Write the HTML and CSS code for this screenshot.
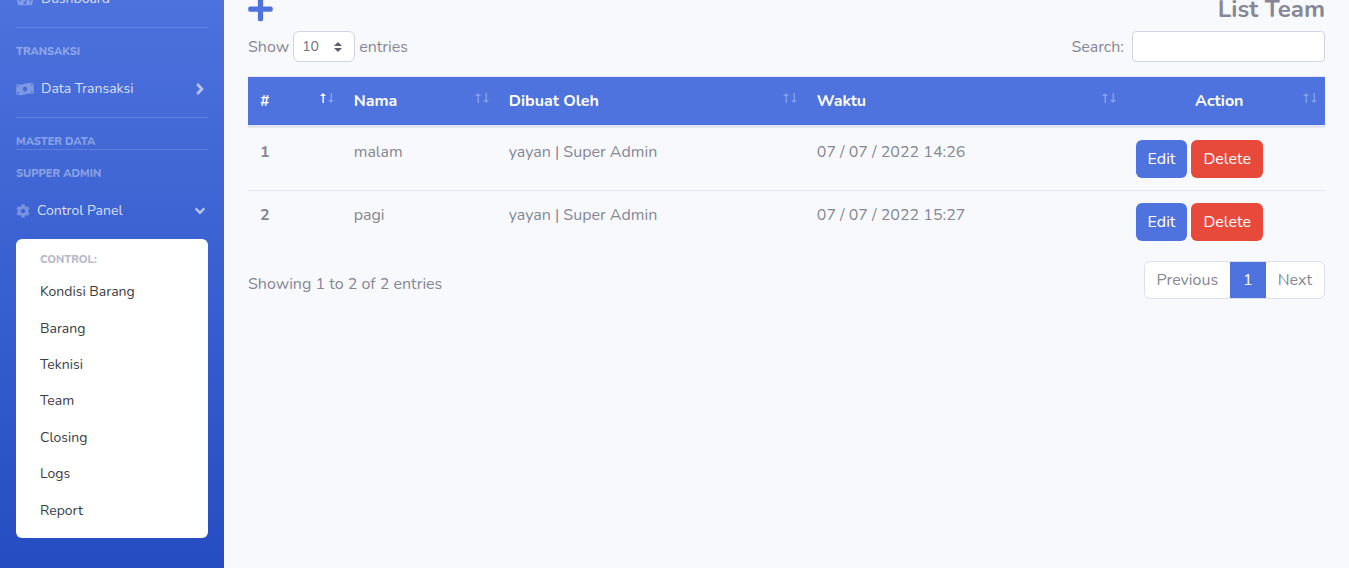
FILE: index.html
```
<!DOCTYPE html>
<html lang="id">
<head>
<meta charset="utf-8">
<meta name="viewport" content="width=device-width, initial-scale=1">
<title>List Team</title>
<link rel="stylesheet" href="styles.css">
</head>
<body>
<svg class="sprite" aria-hidden="true">
  <symbol id="angle-right" viewBox="0 0 256 512"><path d="M224.3 273l-136 136c-9.4 9.4-24.6 9.4-33.9 0l-22.6-22.6c-9.4-9.4-9.4-24.6 0-33.9l96.4-96.4-96.4-96.4c-9.4-9.4-9.4-24.6 0-33.9L54.3 103c9.4-9.4 24.6-9.4 33.9 0l136 136c9.5 9.4 9.5 24.6.1 34z"/></symbol>
  <symbol id="angle-down" viewBox="0 0 320 512"><path d="M143 352.3L7 216.3c-9.4-9.4-9.4-24.6 0-33.9l22.6-22.6c9.4-9.4 24.6-9.4 33.9 0l96.4 96.4 96.4-96.4c9.4-9.4 24.6-9.4 33.9 0l22.6 22.6c9.4 9.4 9.4 24.6 0 33.9l-136 136c-9.2 9.4-24.4 9.4-33.8 0z"/></symbol>
  <symbol id="plus" viewBox="0 0 448 512"><path d="M416 208H272V64c0-17.67-14.33-32-32-32h-32c-17.67 0-32 14.33-32 32v144H32c-17.67 0-32 14.33-32 32v32c0 17.67 14.33 32 32 32h144v144c0 17.67 14.33 32 32 32h32c17.67 0 32-14.33 32-32V304h144c17.67 0 32-14.33 32-32v-32c0-17.67-14.33-32-32-32z"/></symbol>
  <symbol id="cog" viewBox="0 0 512 512"><path d="M487.4 315.7l-42.6-24.6c4.3-23.2 4.3-47 0-70.2l42.6-24.6c4.9-2.8 7.1-8.6 5.5-14-11.1-35.6-30-67.8-54.7-94.6-3.8-4.1-10-5.1-14.8-2.3L380.8 110c-17.9-15.4-38.5-27.3-60.8-35.1V25.8c0-5.6-3.9-10.5-9.4-11.7-36.7-8.2-74.3-7.8-109.2 0-5.5 1.2-9.4 6.1-9.4 11.7V75c-22.2 7.9-42.8 19.8-60.8 35.1L88.7 85.5c-4.9-2.8-11-1.9-14.8 2.3-24.7 26.7-43.6 58.9-54.7 94.6-1.7 5.4.6 11.2 5.5 14L67.3 221c-4.3 23.2-4.3 47 0 70.2l-42.6 24.6c-4.9 2.8-7.1 8.6-5.5 14 11.1 35.6 30 67.8 54.7 94.6 3.8 4.1 10 5.1 14.8 2.3l42.6-24.6c17.9 15.4 38.5 27.3 60.8 35.1v49.2c0 5.6 3.9 10.5 9.4 11.7 36.7 8.2 74.3 7.8 109.2 0 5.5-1.2 9.4-6.1 9.4-11.7v-49.2c22.2-7.9 42.8-19.8 60.8-35.1l42.6 24.6c4.9 2.8 11 1.9 14.8-2.3 24.7-26.7 43.6-58.9 54.7-94.6 1.5-5.5-.7-11.3-5.6-14.1zM256 336c-44.1 0-80-35.9-80-80s35.9-80 80-80 80 35.9 80 80-35.9 80-80 80z"/></symbol>
  <symbol id="money" viewBox="0 0 640 512"><path d="M621.16 54.46C582.37 38.19 543.55 32 504.75 32c-123.17-.01-246.33 62.34-369.5 62.34-30.89 0-61.76-3.92-92.65-13.72-3.47-1.1-6.95-1.62-10.35-1.62C15.04 79 0 92.32 0 110.81v317.26c0 12.63 7.23 24.6 18.84 29.46C57.63 473.81 96.45 480 135.25 480c123.17 0 246.34-62.35 369.51-62.35 30.89 0 61.76 3.92 92.65 13.72 3.47 1.1 6.95 1.62 10.35 1.62 17.21 0 32.25-13.32 32.25-31.81V83.93c-.01-12.64-7.24-24.6-18.85-29.47zM48 132.22c20.12 5.04 41.12 7.57 62.72 8.93C104.84 170.54 79 192.69 48 192.69v-60.47zm0 285v-47.78c34.37 0 62.18 27.27 63.71 61.4-22.53-1.81-43.59-6.31-63.71-13.62zM320 352c-44.19 0-80-42.99-80-96 0-53.02 35.82-96 80-96s80 42.98 80 96c0 53.03-35.83 96-80 96zm272 27.78c-17.52-4.39-35.71-6.85-54.32-8.44 5.87-26.08 27.5-45.88 54.32-49.28v57.72zm0-236.11c-30.89-3.91-54.86-29.7-55.81-61.55 19.54 2.17 38.09 6.23 55.81 12.66v48.89z"/></symbol>
  <symbol id="gauge" viewBox="0 0 576 512"><path fill-rule="evenodd" d="M288 32C129 32 0 161 0 320c0 53 14 102 39 145 6 9 16 15 28 15h442c12 0 22-6 28-15 25-43 39-92 39-145C576 161 447 32 288 32zM96 352a32 32 0 1 1 0-64 32 32 0 0 1 0 64zm48-160a32 32 0 1 1 0-64 32 32 0 0 1 0 64zm144-96a32 32 0 1 1 0 64 32 32 0 0 1 0-64zm79 82c13 4 19 17 15 30l-61 184c20 17 20 41 12 56H243c-28-52 5-96 32-71l61-184c4-13 18-19 31-15zm113 174a32 32 0 1 1 0-64 32 32 0 0 1 0 64z"/></symbol>
  <symbol id="arrow-up" viewBox="0 0 6 10"><path d="M3 0L6 3H4V10H2.500V3H0z"/></symbol>
  <symbol id="arrow-down" viewBox="0 0 6 10"><path d="M3 10L0 7H2.500V0H4V7H6z"/></symbol>
</svg>

<div class="layout">
  <nav class="sidebar" aria-label="Menu">
    <a class="nav-link nav-first" href="#"><svg class="icon icon-wide"><use href="#gauge"/></svg><span>Dashboard</span></a>
    <hr class="divider">
    <div class="heading">TRANSAKSI</div>
    <a class="nav-link" href="#"><svg class="icon icon-wide"><use href="#money"/></svg><span>Data Transaksi</span><svg class="caret"><use href="#angle-right"/></svg></a>
    <hr class="divider">
    <div class="heading heading-tight">MASTER DATA</div>
    <hr class="divider">
    <div class="heading">SUPPER ADMIN</div>
    <a class="nav-link" href="#" aria-expanded="true"><svg class="icon"><use href="#cog"/></svg><span>Control Panel</span><svg class="caret"><use href="#angle-down"/></svg></a>
    <div class="submenu">
      <div class="submenu-title">CONTROL:</div>
      <ul class="submenu-list">
        <li><a href="#">Kondisi Barang</a></li>
        <li><a href="#">Barang</a></li>
        <li><a href="#">Teknisi</a></li>
        <li><a href="#">Team</a></li>
        <li><a href="#">Closing</a></li>
        <li><a href="#">Logs</a></li>
        <li><a href="#">Report</a></li>
      </ul>
    </div>
  </nav>

  <main class="content">
    <header class="page-head">
      <a class="add" href="#" aria-label="Tambah"><svg><use href="#plus"/></svg></a>
      <h1>List Team</h1>
    </header>

    <div class="toolbar">
      <label class="length">Show
        <select><option>10</option><option>25</option><option>50</option><option>100</option></select>
        entries</label>
      <label class="search">Search: <input type="search"></label>
    </div>

    <table class="team">
      <colgroup><col class="col-no"><col class="col-name"><col class="col-by"><col class="col-time"><col class="col-action"></colgroup>
      <thead>
        <tr>
          <th scope="col" aria-sort="ascending"><div class="th"><span>#</span><span class="sort sort-asc"><svg><use href="#arrow-up"/></svg><svg><use href="#arrow-down"/></svg></span></div></th>
          <th scope="col"><div class="th"><span>Nama</span><span class="sort"><svg><use href="#arrow-up"/></svg><svg><use href="#arrow-down"/></svg></span></div></th>
          <th scope="col"><div class="th"><span>Dibuat Oleh</span><span class="sort"><svg><use href="#arrow-up"/></svg><svg><use href="#arrow-down"/></svg></span></div></th>
          <th scope="col"><div class="th"><span>Waktu</span><span class="sort"><svg><use href="#arrow-up"/></svg><svg><use href="#arrow-down"/></svg></span></div></th>
          <th scope="col"><div class="th th-center"><span>Action</span><span class="sort"><svg><use href="#arrow-up"/></svg><svg><use href="#arrow-down"/></svg></span></div></th>
        </tr>
      </thead>
      <tbody>
        <tr>
          <th scope="row">1</th><td>malam</td><td>yayan | Super Admin</td><td>07 / 07 / 2022 14:26</td>
          <td><div class="actions"><button class="btn btn-edit" type="button">Edit</button><button class="btn btn-delete" type="button">Delete</button></div></td>
        </tr>
        <tr>
          <th scope="row">2</th><td>pagi</td><td>yayan | Super Admin</td><td>07 / 07 / 2022 15:27</td>
          <td><div class="actions"><button class="btn btn-edit" type="button">Edit</button><button class="btn btn-delete" type="button">Delete</button></div></td>
        </tr>
      </tbody>
    </table>

    <footer class="table-foot">
      <div>Showing 1 to 2 of 2 entries</div>
      <nav class="pages" aria-label="Halaman">
        <a href="#">Previous</a><a class="current" href="#" aria-current="page">1</a><a href="#">Next</a>
      </nav>
    </footer>
  </main>
</div>
</body>
</html>
```
FILE: styles.css
```
*, *::before, *::after { box-sizing: border-box; }

body {
  margin: 0;
  background: #f8f9fc;
  color: #858796;
  font: 16px/24px Nunito, Lato, "Open Sans", sans-serif;
}

a { color: inherit; text-decoration: none; }
svg { fill: currentColor; flex: none; }
.sprite { display: none; }

.layout {
  display: flex;
  min-height: 100vh;
  overflow: hidden;
}

/* Sidebar */
.sidebar {
  flex: none;
  width: 224px;
  padding: 0 16px 32px;
  background: linear-gradient(180deg, #4d72de 0%, #254dc1 100%);
  color: rgba(255, 255, 255, .8);
}

.nav-link {
  display: flex;
  align-items: center;
  gap: 7px;
  height: 56px;
  padding-right: 3px;
  font-size: 14px;
  line-height: 20px;
}
.nav-first { margin-top: -29px; }
.icon { width: 14px; height: 14px; color: rgba(255, 255, 255, .3); }
.icon-wide { width: 18px; }
.caret { width: 10px; height: 18px; margin-left: auto; color: rgba(255, 255, 255, .6); }

.divider {
  margin: 0;
  border: 0;
  border-top: 1px solid rgba(255, 255, 255, .15);
}

.heading {
  padding-top: 16px;
  color: rgba(255, 255, 255, .4);
  font-size: 11px;
  font-weight: 800;
  line-height: 16px;
}
.heading + .nav-link { height: 57px; }
.heading-tight { margin-bottom: -1px; }

.submenu {
  padding: 13px 0 9px 24px;
  background: #fff;
  border-radius: 6px;
}
.submenu-title {
  color: #b7b9cc;
  font-size: 11px;
  font-weight: 800;
  line-height: 16px;
}
.submenu-list {
  display: grid;
  grid-auto-rows: 1fr;
  min-height: 255px;
  margin: 6px 0 0;
  padding: 0;
  list-style: none;
}
.submenu-list a {
  display: flex;
  align-items: center;
  height: 100%;
  color: #3a3b45;
  font-size: 14px;
}

/* Page */
.content {
  flex: 1;
  min-width: 0;
  padding: 0 24px;
}

.page-head {
  display: flex;
  align-items: center;
  justify-content: space-between;
  height: 28px;
  margin: -5px 0 8px;
}
.page-head h1 { margin: 0; font-size: 24px; line-height: 28px; }
.add { display: flex; color: #4e73df; }
.add svg { width: 25px; height: 28px; }

.toolbar {
  display: flex;
  justify-content: space-between;
  margin-bottom: 14px;
}
.toolbar label { display: flex; align-items: center; }
.length { gap: 4px; }
.search { gap: 8px; }

select, input {
  height: 31px;
  border: 1px solid #d1d3e2;
  border-radius: 4px;
  background: #fff;
  color: #6e707e;
  font: inherit;
  font-size: 14px;
}
select {
  appearance: none;
  width: 62px;
  padding: 0 8px;
  border-radius: 6px;
  background: #fff url("data:image/svg+xml,%3Csvg xmlns='http://www.w3.org/2000/svg' viewBox='0 0 4 5'%3E%3Cpath fill='%235a5c69' d='M2 0L0 2h4zm0 5L0 3h4z'/%3E%3C/svg%3E") right 12px center / 8px 10px no-repeat;
}
input { width: 193px; padding: 0 8px; }

.team {
  width: 100%;
  border-collapse: separate;
  border-spacing: 0;
  table-layout: fixed;
  text-align: left;
}
.col-no { width: 8.7%; }
.col-name { width: 14.4%; }
.col-by { width: 28.6%; }
.col-time { width: 29.6%; }
.col-action { width: 18.7%; }

.team th, .team td {
  padding: 12px;
  vertical-align: top;
  border-top: 1px solid #e3e6f0;
}
.team thead th {
  padding-right: 8px;
  border-bottom: 2px solid #e3e6f0;
  background: #4e73df;
  background-clip: padding-box;
  color: #fff;
}
.th { display: flex; justify-content: space-between; }
.th-center > span:first-child { flex: 1; text-align: center; }
.sort { display: flex; gap: 2px; padding-top: 4px; color: rgba(255, 255, 255, .3); }
.sort svg { width: 6px; height: 10px; }
.sort-asc svg:first-child { color: #fff; }

.actions { display: flex; gap: 4px; }
.btn {
  height: 38px;
  padding: 0 12px;
  border: 0;
  border-radius: 6px;
  color: #fff;
  font: inherit;
}
.btn-edit { background: #4e73df; }
.btn-delete { background: #e74a3b; }

.table-foot {
  display: flex;
  align-items: center;
  justify-content: space-between;
  margin-top: 8px;
}
.table-foot > div { padding-top: 8px; }
.pages {
  display: flex;
  overflow: hidden;
  border: 1px solid #dddfeb;
  border-radius: 6px;
  background: #fff;
}
.pages a { padding: 6px 12px; }
.pages .current { margin: -1px 0; padding: 7px 13px; background: #4e73df; color: #fff; }
```
